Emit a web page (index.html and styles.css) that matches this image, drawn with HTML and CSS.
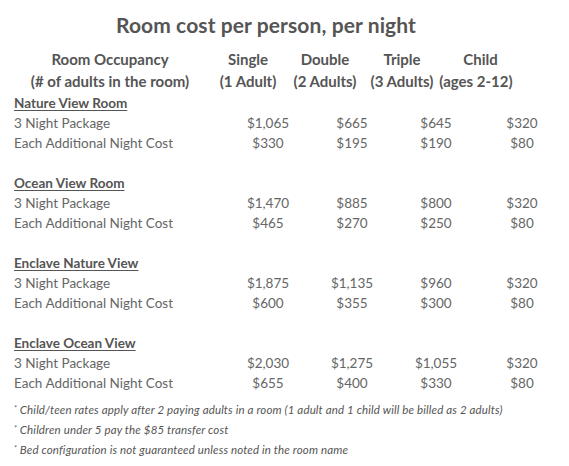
FILE: index.html
```html
<!DOCTYPE html>
<html lang="en">
<head>
<meta charset="utf-8">
<title>Room cost per person, per night</title>
<link rel="stylesheet" href="styles.css">
</head>
<body>
<div class="page">
  <h1 class="title">Room cost per person, per night</h1>
  <div class="head">
    <div class="hc first">Room Occupancy</div>
    <div class="hc">Single</div>
    <div class="hc">Double</div>
    <div class="hc">Triple</div>
    <div class="hc child">Child</div>
    <div class="hc first">(# of adults in the room)</div>
    <div class="hc">(1 Adult)</div>
    <div class="hc">(2 Adults)</div>
    <div class="hc">(3 Adults)</div>
    <div class="hc">(ages 2-12)</div>
  </div>

  <div class="rates">
    <div class="room"><span>Nature View Room</span></div>
    <div class="label">3 Night Package</div><div class="v">$1,065</div><div class="v">$665</div><div class="v">$645</div><div class="v">$320</div>
    <div class="label">Each Additional Night Cost</div><div class="v">$330</div><div class="v">$195</div><div class="v">$190</div><div class="v">$80</div>
    <div class="gap"></div>

    <div class="room"><span>Ocean View Room</span></div>
    <div class="label">3 Night Package</div><div class="v">$1,470</div><div class="v">$885</div><div class="v">$800</div><div class="v">$320</div>
    <div class="label">Each Additional Night Cost</div><div class="v">$465</div><div class="v">$270</div><div class="v">$250</div><div class="v">$80</div>
    <div class="gap"></div>

    <div class="room"><span>Enclave Nature View</span></div>
    <div class="label">3 Night Package</div><div class="v">$1,875</div><div class="v">$1,135</div><div class="v">$960</div><div class="v">$320</div>
    <div class="label">Each Additional Night Cost</div><div class="v">$600</div><div class="v">$355</div><div class="v">$300</div><div class="v">$80</div>
    <div class="gap"></div>

    <div class="room"><span>Enclave Ocean View</span></div>
    <div class="label">3 Night Package</div><div class="v">$2,030</div><div class="v">$1,275</div><div class="v">$1,055</div><div class="v">$320</div>
    <div class="label">Each Additional Night Cost</div><div class="v">$655</div><div class="v">$400</div><div class="v">$330</div><div class="v">$80</div>
  </div>

  <ul class="notes">
    <li><sup>*</sup> Child/teen rates apply after 2 paying adults in a room (1 adult and 1 child will be billed as 2 adults)</li>
    <li><sup>*</sup> Children under 5 pay the $85 transfer cost</li>
    <li><sup>*</sup> Bed configuration is not guaranteed unless noted in the room name</li>
  </ul>
</div>
</body>
</html>
```
FILE: styles.css
```css
* { box-sizing: border-box; }
html, body { margin: 0; padding: 0; background: #fff; }
body {
  font-family: "Lato", "Open Sans", "Liberation Sans", sans-serif;
  color: #666;
}
.page { width: 569px; padding: 0 0 0 14px; }

.title {
  margin: 0;
  padding-top: 10px;
  padding-right: 51px;
  height: 48px;
  font-size: 21px;
  line-height: 30px;
  font-weight: 700;
  color: #555;
  text-align: center;
  letter-spacing: 0.1px;
}

.head {
  display: grid;
  grid-template-columns: 204px 72px 82px 72px 76px;
  margin-left: -6px;
  font-size: 15px;
  font-weight: 700;
  line-height: 22px;
  color: #555;
}
.hc { text-align: center; white-space: nowrap; }
.hc.child { padding-left: 9px; }

.rates {
  display: grid;
  grid-template-columns: 212px 84px 84px 84px 88px;
  font-size: 13.5px;
  line-height: 20px;
  margin-top: 1px;
}
.room {
  grid-column: 1 / -1;
  font-weight: 700;
  color: #555;
}
.room span { text-decoration: underline; text-underline-offset: 2px; }
.gap { grid-column: 1 / -1; height: 20px; }
.label { white-space: nowrap; }
.v { text-align: center; }

.notes {
  list-style: none;
  margin: 7px 0 0 0;
  padding: 0;
  font-size: 11.5px;
  font-style: italic;
  line-height: 20px;
  letter-spacing: 0.15px;
  color: #555;
}
.notes li { height: 20px; white-space: nowrap; }
.notes sup { font-size: 7px; line-height: 0; vertical-align: 3px; }
```
